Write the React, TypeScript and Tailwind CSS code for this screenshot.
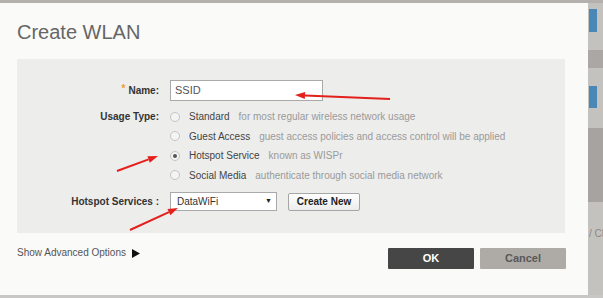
import React from "react";

const usageOptions = [
  { label: "Standard", hint: "for most regular wireless network usage" },
  { label: "Guest Access", hint: "guest access policies and access control will be applied" },
  { label: "Hotspot Service", hint: "known as WISPr", checked: true },
  { label: "Social Media", hint: "authenticate through social media network" },
];

function Radio({ checked }: { checked?: boolean }) {
  return (
    <span className="flex h-[10px] w-[10px] items-center justify-center rounded-full border border-[#c4c4c4] bg-[#f4f4f4]">
      {checked && <span className="h-[4px] w-[4px] rounded-full bg-[#555]" />}
    </span>
  );
}

function Arrow({ x1, y1, x2, y2 }: { x1: number; y1: number; x2: number; y2: number }) {
  const a = Math.atan2(y2 - y1, x2 - x1);
  const len = 10;
  const w = 3.5;
  const bx = x2 - len * Math.cos(a);
  const by = y2 - len * Math.sin(a);
  const px = -Math.sin(a) * w;
  const py = Math.cos(a) * w;
  return (
    <g>
      <line x1={x1} y1={y1} x2={bx} y2={by} stroke="#e4201c" strokeWidth={2} />
      <polygon points={`${x2},${y2} ${bx + px},${by + py} ${bx - px},${by - py}`} fill="#e4201c" />
    </g>
  );
}

export default function App() {
  return (
    <div
      className="relative flex h-[298px] w-[603px] flex-col overflow-hidden bg-[#c3c1be] text-[#333]"
      style={{ fontFamily: '"Liberation Sans", Arial, sans-serif' }}
    >
      {/* page strip above the dialog */}
      <div className="h-[3px] w-full shrink-0 bg-[#b3b0ad]" />

      <div className="flex h-[292px] shrink-0">
        {/* dialog */}
        <div className="flex w-[588px] shrink-0 flex-col bg-[#fafaf9] pl-[17px] pr-[22px]">
          <h1 className="mt-[19px] h-[20px] text-[20px] leading-none text-[#666]">Create WLAN</h1>

          <div className="mt-[17px] h-[174px] w-[548px] bg-[#ededec] pt-[21px] text-[10px]">
            <div className="grid grid-cols-[142px_1fr] gap-x-[11px]">
              {/* Name */}
              <div className="flex h-[21px] items-center justify-end font-bold">
                <span className="mr-[3px] -translate-y-[2px] text-[#f39b2b]">*</span>
                Name:
              </div>
              <div className="flex h-[21px] w-[153px] items-center border border-[#a9a9a9] bg-white pl-[4px] text-[11px] text-[#555]">
                SSID
              </div>

              {/* Usage type */}
              <div className="mt-[6px] flex h-[19.5px] items-center justify-end font-bold">Usage Type:</div>
              <div className="mt-[6px] flex flex-col">
                {usageOptions.map((o) => (
                  <div key={o.label} className="flex h-[19.5px] items-center">
                    <Radio checked={o.checked} />
                    <span className="ml-[9px] text-[#444]">{o.label}</span>
                    <span className="ml-[9px] text-[#9a9a9a]">{o.hint}</span>
                  </div>
                ))}
              </div>

              {/* Hotspot services */}
              <div className="mt-[7px] flex h-[19px] items-center justify-end font-bold">Hotspot Services :</div>
              <div className="mt-[7px] flex items-center">
                <div className="flex h-[19px] w-[107px] items-center justify-between border border-[#a9a9a9] bg-white pl-[6px] pr-[4px] text-[#333]">
                  <span>DataWiFi</span>
                  <span className="text-[7px] text-[#222]">▼</span>
                </div>
                <button className="ml-[11px] h-[18px] w-[72px] rounded-[2px] border border-[#a6a6a6] bg-gradient-to-b from-white to-[#ececec] text-[10px] font-bold text-[#222]">
                  Create New
                </button>
              </div>
            </div>
          </div>

          <div className="mt-[15px] flex items-start justify-between">
            <div className="mt-[-1px] flex items-center text-[10px] leading-[12px] text-[#555]">
              Show Advanced Options
              <svg className="ml-[6px]" width={8} height={9} viewBox="0 0 8 9">
                <polygon points="0,0 8,4.5 0,9" fill="#111" />
              </svg>
            </div>
            <div className="flex gap-[6px]">
              <button className="h-[21px] w-[86px] rounded-[1px] bg-[#474646] text-[11px] font-bold text-white">OK</button>
              <button className="h-[21px] w-[86px] rounded-[1px] bg-[#aeaba7] text-[11px] font-bold text-[#585858]">
                Cancel
              </button>
            </div>
          </div>
        </div>

        {/* page behind the dialog */}
        <div className="flex flex-1 flex-col bg-[#c4c2bf]">
          <div className="mt-[6px] ml-[1px] h-[23px] w-[8px] bg-[#4a87b6]" />
          <div className="mt-[18px] h-[18px] bg-[#aaa7a4]" />
          <div className="mt-[18px] ml-[1px] h-[22px] w-[8px] bg-[#4a87b6]" />
          <div className="mt-[20px] h-[74px] bg-[#a6a3a0]" />
          <div className="mt-[24px] whitespace-nowrap pl-[1px] text-[10px] text-[#888]">/ Cl</div>
        </div>
      </div>

      {/* page strip below the dialog */}
      <div className="h-[3px] w-full shrink-0 bg-[#c9c7c5]" />

      {/* red annotation arrows */}
      <svg className="pointer-events-none absolute left-0 top-0" width={603} height={298}>
        <Arrow x1={390} y1={99} x2={295} y2={95} />
        <Arrow x1={117} y1={171} x2={158} y2={156} />
        <Arrow x1={130} y1={230} x2={178} y2={208} />
      </svg>
    </div>
  );
}
